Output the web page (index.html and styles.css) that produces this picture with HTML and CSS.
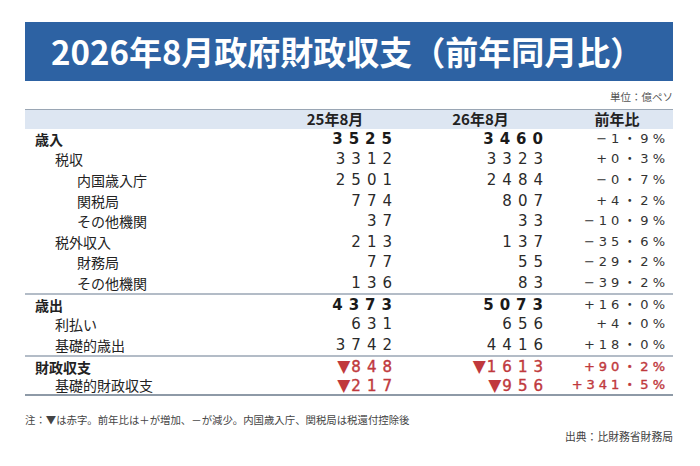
FILE: index.html
```html
<!DOCTYPE html>
<html lang="ja">
<head>
<meta charset="utf-8">
<title>2026年8月政府財政収支</title>
<link rel="stylesheet" href="styles.css">
</head>
<body>
<div class="page">
  <h1 class="title">2026年8月政府財政収支（前年同月比）</h1>
  <div class="unit">単位：億ペソ</div>
  <div class="table">
    <div class="row head">
      <div class="label"></div>
      <div class="c2">25年8月</div>
      <div class="c3">26年8月</div>
      <div class="c4">前年比</div>
    </div>
    <div class="row bold">
      <div class="label l0">歳入</div>
      <div class="num"><span>3525</span></div>
      <div class="num"><span>3460</span></div>
      <div class="pct"><span>−1・9%</span></div>
    </div>
    <div class="row">
      <div class="label l1">税収</div>
      <div class="num"><span>3312</span></div>
      <div class="num"><span>3323</span></div>
      <div class="pct"><span>+0・3%</span></div>
    </div>
    <div class="row">
      <div class="label l2">内国歳入庁</div>
      <div class="num"><span>2501</span></div>
      <div class="num"><span>2484</span></div>
      <div class="pct"><span>−0・7%</span></div>
    </div>
    <div class="row">
      <div class="label l2">関税局</div>
      <div class="num"><span>774</span></div>
      <div class="num"><span>807</span></div>
      <div class="pct"><span>+4・2%</span></div>
    </div>
    <div class="row">
      <div class="label l2">その他機関</div>
      <div class="num"><span>37</span></div>
      <div class="num"><span>33</span></div>
      <div class="pct"><span>−10・9%</span></div>
    </div>
    <div class="row">
      <div class="label l1">税外収入</div>
      <div class="num"><span>213</span></div>
      <div class="num"><span>137</span></div>
      <div class="pct"><span>−35・6%</span></div>
    </div>
    <div class="row">
      <div class="label l2">財務局</div>
      <div class="num"><span>77</span></div>
      <div class="num"><span>55</span></div>
      <div class="pct"><span>−29・2%</span></div>
    </div>
    <div class="row">
      <div class="label l2">その他機関</div>
      <div class="num"><span>136</span></div>
      <div class="num"><span>83</span></div>
      <div class="pct"><span>−39・2%</span></div>
    </div>
    <div class="row bold sep">
      <div class="label l0">歳出</div>
      <div class="num"><span>4373</span></div>
      <div class="num"><span>5073</span></div>
      <div class="pct"><span>+16・0%</span></div>
    </div>
    <div class="row">
      <div class="label l1">利払い</div>
      <div class="num"><span>631</span></div>
      <div class="num"><span>656</span></div>
      <div class="pct"><span>+4・0%</span></div>
    </div>
    <div class="row">
      <div class="label l1">基礎的歳出</div>
      <div class="num"><span>3742</span></div>
      <div class="num"><span>4416</span></div>
      <div class="pct"><span>+18・0%</span></div>
    </div>
    <div class="row red sep">
      <div class="label l0">財政収支</div>
      <div class="num"><span><i class="tri">▼</i>848</span></div>
      <div class="num"><span><i class="tri">▼</i>1613</span></div>
      <div class="pct"><span>+90・2%</span></div>
    </div>
    <div class="row red last">
      <div class="label l1">基礎的財政収支</div>
      <div class="num"><span><i class="tri">▼</i>217</span></div>
      <div class="num"><span><i class="tri">▼</i>956</span></div>
      <div class="pct"><span>+341・5%</span></div>
    </div>
  </div>
  <p class="note">注：▼は赤字。前年比は＋が増加、－が減少。内国歳入庁、関税局は税還付控除後</p>
  <p class="source">出典：比財務省財務局</p>
</div>
</body>
</html>
```
FILE: styles.css
```css
* { box-sizing: border-box; }
html, body { margin: 0; padding: 0; background: #ffffff; }
body {
  font-family: "Noto Sans CJK JP", "Noto Sans", sans-serif;
  color: #222;
}
.page {
  width: 700px;
  height: 466px;
  padding: 22px 27px 0 25px;
  display: flex;
  flex-direction: column;
}
.title {
  margin: 0;
  height: 59px;
  background: #2d62a3;
  color: #fff;
  font-size: 33px;
  font-weight: 700;
  line-height: 59px;
  padding-left: 26px;
  letter-spacing: 0;
}
.unit {
  margin-top: 9px;
  text-align: right;
  font-size: 10.5px;
  line-height: 14px;
  color: #555;
}
.table {
  margin-top: 5px;
  display: flex;
  flex-direction: column;
}
.row {
  display: grid;
  grid-template-columns: 245px 130px 151px 122px;
  height: 20.6px;
  align-items: center;
  font-size: 14px;
}
.row.head {
  border-top: 1px solid #9aa6b4;
  background: #dde6f2;
  height: 19.5px;
  font-weight: 700;
  font-size: 15px;
  line-height: 18px;
}
.head .c2 { text-align: center; }
.head .c3 { text-align: center; padding-left: 18px; padding-right: 8px; }
.head .c4 { text-align: center; padding-left: 18px; padding-right: 8px; }
.row.sep { border-top: 2px solid #b3bcc7; }
.row.last { border-bottom: 2px solid #8e9aa7; }
.label { line-height: 18px; white-space: nowrap; }
.l0 { padding-left: 10px; font-weight: 700; }
.l1 { padding-left: 30px; }
.l2 { padding-left: 52px; }
.num, .pct {
  text-align: right;
  padding-right: 8px;
  font-family: "DejaVu Sans", "Noto Sans CJK JP", sans-serif;
  color: #2a2a2a;
  white-space: nowrap;
  line-height: 18px;
}
.num { font-size: 15px; }
.num span { letter-spacing: 6px; margin-right: -6px; }
.pct { font-size: 13px; color: #333; }
.pct span { letter-spacing: 4px; margin-right: -4px; }
.tri {
  font-style: normal;
  font-size: 17px;
  letter-spacing: 1px;
  -webkit-text-stroke: 0;
}
.bold .num { font-weight: 700; color: #1a1a1a; }
.red .num, .red .pct {
  color: #c0393d;
  -webkit-text-stroke: 0.4px #c0393d;
}
.note {
  margin: 17px 0 0 0;
  font-size: 10.4px;
  line-height: 14px;
  color: #444;
}
.source {
  margin: 2px 0 0 0;
  text-align: right;
  font-size: 10.8px;
  line-height: 14px;
  color: #444;
}
```
